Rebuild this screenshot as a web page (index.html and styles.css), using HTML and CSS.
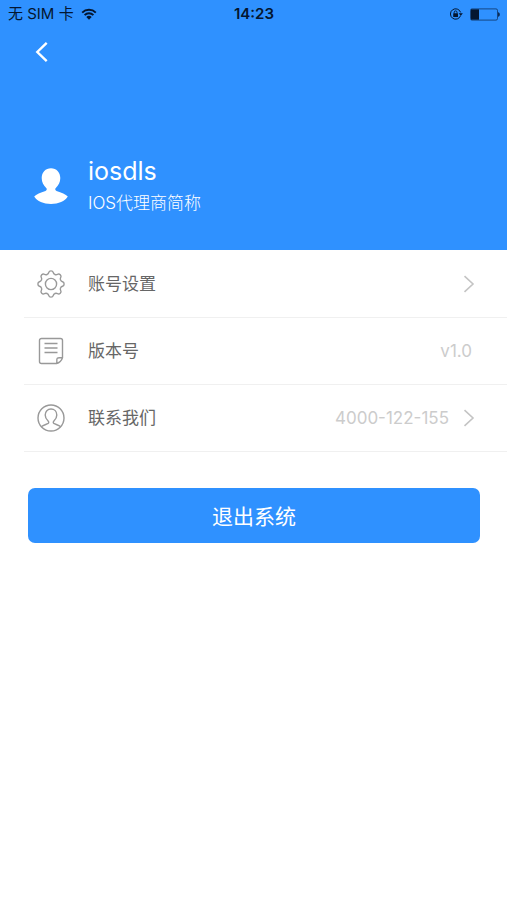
FILE: index.html
```
<!DOCTYPE html>
<html lang="zh-CN">
<head>
<meta charset="utf-8">
<meta name="viewport" content="width=device-width, initial-scale=1">
<title>iosdls</title>
<link rel="stylesheet" href="styles.css">
</head>
<body>
<header class="hero">
  <div class="status">
    <div class="status-left">
      <span>无 SIM 卡</span>
      <svg class="wifi" viewBox="0 0 16 12" width="16" height="12" aria-hidden="true">
        <path d="M1.2 4.6a9.8 9.8 0 0 1 13.6 0M3.6 7.1a6.3 6.3 0 0 1 8.8 0" fill="none" stroke="currentColor" stroke-width="2"/>
        <path d="M5.3 9a4 4 0 0 1 5.4 0L8 11.8z" fill="currentColor"/>
      </svg>
    </div>
    <time class="clock">14:23</time>
    <div class="status-right">
      <svg viewBox="0 0 14 12" width="14" height="12" aria-hidden="true">
        <path d="M11.6 7.6A5.2 5.2 0 1 1 11.6 4.4" fill="none" stroke="currentColor"/>
        <path d="M9.7 5.2h4.2l-2.1 2.6z" fill="currentColor"/>
        <rect x="4.2" y="5.3" width="4.8" height="3.7" rx=".5" fill="currentColor"/>
        <path d="M5.2 5.5V4.3a1.4 1.4 0 0 1 2.8 0v1.2" fill="none" stroke="currentColor" stroke-width=".9"/>
      </svg>
      <svg viewBox="0 0 30 13" width="30" height="13" aria-hidden="true">
        <rect x=".5" y=".9" width="27" height="11.2" rx="1.5" fill="none" stroke="currentColor" stroke-width=".6"/>
        <path d="M1 1.3h8v10.4H1z" fill="currentColor"/>
        <path d="M28.2 4.2c2 .5 2 4.1 0 4.600z" fill="currentColor"/>
      </svg>
    </div>
  </div>
  <button class="back" type="button" aria-label="返回">
    <svg viewBox="0 0 14 22" width="14" height="22" aria-hidden="true"><path d="M11.7 1.8 2.3 11l9.4 9.2" fill="none" stroke="currentColor" stroke-width="2.4"/></svg>
  </button>
  <div class="profile">
    <svg viewBox="0 0 34 38" width="34" height="38" aria-hidden="true">
      <path d="M17 1.2c5.400 0 9.300 4.100 9.300 9.800 0 4.100-1.800 7.600-4.300 9.700-1.200 1-1 2.600.5 3.200 5 1.700 9.300 3.100 11.300 5.700C30.800 34.400 24.600 37 17 37S3.200 34.400.2 29.600c2-2.600 6.300-4 11.300-5.700 1.500-.6 1.700-2.200.5-3.200C9.500 18.600 7.700 15.100 7.700 11c0-5.700 3.900-9.800 9.300-9.800z" fill="currentColor"/>
    </svg>
    <div>
      <h1 class="name">iosdls</h1>
      <p class="agent">IOS代理商简称</p>
    </div>
  </div>
</header>
<main>
  <ul class="menu">
    <li><a class="row" href="#account">
      <svg class="icon" viewBox="-14 -14 28 28" width="28" height="28" aria-hidden="true">
        <defs><path id="tooth" d="M-3.940-9.520C-2.600-10.060-2.500-10.600-2.200-11.600-1.700-13.600 1.700-13.600 2.200-11.600 2.500-10.600 2.600-10.060 3.940-9.520"/></defs>
        <use href="#tooth"/><use href="#tooth" transform="rotate(45)"/><use href="#tooth" transform="rotate(90)"/><use href="#tooth" transform="rotate(135)"/>
        <use href="#tooth" transform="rotate(180)"/><use href="#tooth" transform="rotate(225)"/><use href="#tooth" transform="rotate(270)"/><use href="#tooth" transform="rotate(315)"/>
        <circle r="5.600"/>
      </svg>
      <span class="label">账号设置</span>
      <svg class="chevron" viewBox="0 0 12 18" width="12" height="18" aria-hidden="true"><path d="m1.500 1.200 8.500 7.800-8.500 7.800"/></svg>
    </a></li>
    <li><div class="row">
      <svg class="icon" viewBox="0 0 28 28" width="28" height="28" aria-hidden="true">
        <path d="M19.500 26.500h-15a2 2 0 0 1-2-2v-21a2 2 0 0 1 2-2h19a2 2 0 0 1 2 2v17.200c-1 3-3 5-6 5.800zM19.500 26.500c1-1.500-.4-4 .8-5.200s3.700 0 5.200-.8M7.500 6.500h13M7.500 11h13M7.500 15.500h13"/>
      </svg>
      <span class="label">版本号</span>
      <span class="value version">v1.0</span>
    </div></li>
    <li><a class="row" href="tel:4000-122-155">
      <svg class="icon" viewBox="0 0 28 28" width="28" height="28" aria-hidden="true">
        <circle cx="14" cy="14" r="13"/>
        <path d="M4.300 22.700c2-1.700 4.600-2.100 6.500-3 1.200-.6 1.200-1.800.3-2.700C9.300 15.300 8.200 13.300 8.200 10.900c0-3.500 2.400-5.900 5.800-5.900s5.800 2.400 5.800 5.900c0 2.400-1.100 4.400-2.900 6.100-.9.900-.9 2.100.3 2.700 1.900.9 4.500 1.300 6.500 3"/>
      </svg>
      <span class="label">联系我们</span>
      <span class="value">4000-122-155</span>
      <svg class="chevron" viewBox="0 0 12 18" width="12" height="18" aria-hidden="true"><path d="m1.500 1.200 8.500 7.800-8.500 7.800"/></svg>
    </a></li>
  </ul>
  <div class="actions"><button class="logout" type="button">退出系统</button></div>
</main>
</body>
</html>
```
FILE: styles.css
```
* { box-sizing: border-box; }

body {
  margin: 0;
  background: #fff;
  color: #666;
  font-family: Inter, "Noto Sans CJK SC", sans-serif;
  font-size: 17px;
}

svg { display: block; flex: none; }

.hero {
  padding-bottom: 35px;
  background: #2f91ff;
  color: #fff;
}

.status {
  display: grid;
  grid-template-columns: 1fr auto 1fr;
  align-items: center;
  height: 28px;
  padding: 0 7px 0 8px;
  color: #041630;
  font-size: 15px;
  line-height: 20px;
}

.status-left,
.status-right {
  display: flex;
  align-items: center;
  gap: 7px;
}

.status-right { justify-content: flex-end; }

.clock {
  font-weight: 600;
}

.back {
  display: flex;
  align-items: center;
  justify-content: center;
  width: 44px;
  height: 48px;
  margin-left: 20px;
  padding: 0;
  border: 0;
  background: none;
  color: inherit;
}

.profile {
  display: flex;
  align-items: center;
  gap: 20px;
  padding: 79px 34px 0;
}

.profile svg { margin-top: 2px; }

.name {
  margin: 0;
  font-size: 25px;
  font-weight: 400;
  line-height: 32px;
}

.agent {
  margin: 4px 0 0;
  font-size: 17px;
  font-weight: 300;
  line-height: 24px;
}

.menu {
  margin: 0;
  padding: 1px 0 0 24px;
  list-style: none;
}

.menu li { border-bottom: 1px solid #f0f0f0; }

.row {
  display: flex;
  align-items: center;
  height: 66px;
  padding: 0 32px 0 13px;
  color: inherit;
  text-decoration: none;
}

.icon {
  margin-right: 23px;
  fill: none;
  stroke: #999;
  stroke-width: 1.4;
}

.label {
  flex: 1;
  padding-bottom: 3px;
}

.value {
  color: #ccc;
  font-size: 17px;
}

.version { margin-right: 3px; }

.chevron {
  margin-left: 14px;
  fill: none;
  stroke: #c4c4c4;
  stroke-width: 1.6;
}

.actions { padding: 36px 27px 0 28px; }

.logout {
  display: block;
  width: 100%;
  height: 55px;
  padding: 0 0 2px;
  border: 0;
  border-radius: 7px;
  background: #2f91ff;
  color: #fff;
  font: inherit;
  font-size: 21px;
}
```
